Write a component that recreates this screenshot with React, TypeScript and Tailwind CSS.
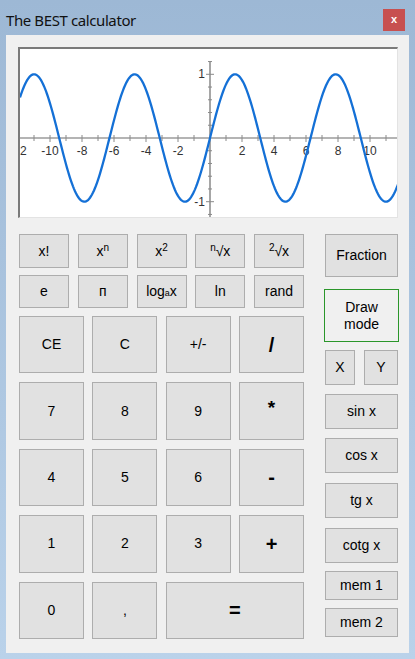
import type { ReactNode } from "react";

const OX = 190;
const OY = 89;
const SX = 16;
const SY = 63.7;

function sinePath() {
  const pts: string[] = [];
  for (let px = 0; px <= 378; px += 1) {
    const x = (px - OX) / SX;
    const y = OY - Math.sin(x) * SY;
    pts.push(`${px === 0 ? "M" : "L"}${px},${y.toFixed(2)}`);
  }
  return pts.join(" ");
}

const labelFont = "Liberation Sans, Arial, sans-serif";

function Graph() {
  const xs: number[] = [];
  for (let i = -12; i <= 12; i++) xs.push(i);
  const ys: number[] = [];
  for (let i = -6; i <= 6; i++) ys.push(i);

  return (
    <div className="w-[380px] h-[171px] bg-white border-t-2 border-l-2 border-t-[#7a7a7a] border-l-[#7a7a7a] border-r border-b border-r-[#e3e3e3] border-b-[#e3e3e3] overflow-hidden">
      <svg width="377" height="168" className="block">
        <line x1="0" y1={OY} x2="377" y2={OY} stroke="#6b6b6b" strokeWidth="1.2" />
        <line x1={OX} y1={OY - 1.2 * SY} x2={OX} y2="168" stroke="#6b6b6b" strokeWidth="1.2" />
        {xs.map((i) =>
          i === 0 ? null : (
            <line
              key={"xt" + i}
              x1={OX + i * SX}
              y1={OY - 3}
              x2={OX + i * SX}
              y2={OY + (i % 2 === 0 ? 4 : 3)}
              stroke="#8a8a8a"
              strokeWidth="1"
            />
          )
        )}
        {ys.map((i) =>
          i === 0 ? null : (
            <line
              key={"yt" + i}
              x1={OX - (Math.abs(i) === 5 ? 4 : 2)}
              y1={OY - (i / 5) * SY}
              x2={OX + (Math.abs(i) === 5 ? 4 : 2)}
              y2={OY - (i / 5) * SY}
              stroke="#8a8a8a"
              strokeWidth="1"
            />
          )
        )}
        {/* only the tail of the -12 label shows at the left edge */}
        <text x="0" y={OY + 17} fontSize="12" fontFamily={labelFont} fill="#333">
          2
        </text>
        {[-10, -8, -6, -4, -2, 2, 4, 6, 8, 10].map((i) => (
          <text
            key={"xl" + i}
            x={OX + i * SX}
            y={OY + 17}
            textAnchor="middle"
            fontSize="12"
            fontFamily={labelFont}
            fill="#333"
          >
            {i}
          </text>
        ))}
        <text x={OX - 5} y={OY - SY + 4} textAnchor="end" fontSize="12" fontFamily={labelFont} fill="#333">
          1
        </text>
        <text x={OX - 5} y={OY + SY + 4} textAnchor="end" fontSize="12" fontFamily={labelFont} fill="#333">
          -1
        </text>
        <path d={sinePath()} fill="none" stroke="#1470d6" strokeWidth="2.3" />
      </svg>
    </div>
  );
}

function Btn({ children, className = "" }: { children: ReactNode; className?: string }) {
  return (
    <div
      className={
        "flex items-center justify-center bg-[#e1e1e1] border border-[#adadad] text-black " +
        className
      }
    >
      {children}
    </div>
  );
}

function Sup({ children }: { children: ReactNode }) {
  return <span className="text-[10px] relative -top-[4px]">{children}</span>;
}

export default function App() {
  return (
    <div className="w-[415px] h-[659px] bg-gradient-to-b from-[#9db8d5] to-[#bad2ea] flex flex-col font-['Liberation_Sans',Arial,sans-serif] overflow-hidden">
      {/* title bar */}
      <div className="h-[35px] flex items-center justify-between pl-[6px] pr-[10px] pt-[5px]">
        <span className="text-[15px] text-[#111] font-['Noto_Sans',sans-serif] tracking-[-0.4px]">
          The BEST calculator
        </span>
        <div className="w-[22px] h-[22px] bg-[#c75050] flex items-center justify-center text-white text-[11px] font-bold leading-none pb-[2px]">
          x
        </div>
      </div>

      {/* client */}
      <div className="mx-[6px] h-[618px] bg-[#f0f0f0] pt-[12px] pl-[12px]">
        <Graph />

        <div className="mt-[16px] flex">
          {/* left keys */}
          <div className="w-[285px] ml-[1px]">
            <div className="flex justify-between h-[34px] text-[14px]">
              <Btn className="w-[50px]">x!</Btn>
              <Btn className="w-[50px]">
                x<Sup>n</Sup>
              </Btn>
              <Btn className="w-[50px]">
                x<Sup>2</Sup>
              </Btn>
              <Btn className="w-[50px]">
                <Sup>n</Sup>√x
              </Btn>
              <Btn className="w-[50px]">
                <Sup>2</Sup>√x
              </Btn>
            </div>
            <div className="mt-[7px] flex justify-between h-[33px] text-[14px]">
              <Btn className="w-[50px]">e</Btn>
              <Btn className="w-[50px]">п</Btn>
              <Btn className="w-[50px]">
                log<span className="text-[9px] mt-[4px]">a</span>x
              </Btn>
              <Btn className="w-[50px]">ln</Btn>
              <Btn className="w-[50px]">rand</Btn>
            </div>
            <div className="mt-[8px] h-[323px] grid grid-cols-[65px_65px_65px_65px] justify-between grid-rows-5 gap-y-[9px] text-[14px]">
              <Btn>CE</Btn>
              <Btn>C</Btn>
              <Btn>+/-</Btn>
              <Btn className="text-[20px] font-bold">/</Btn>
              <Btn>7</Btn>
              <Btn>8</Btn>
              <Btn>9</Btn>
              <Btn className="text-[19px] font-bold pb-[6px]">*</Btn>
              <Btn>4</Btn>
              <Btn>5</Btn>
              <Btn>6</Btn>
              <Btn className="text-[20px] font-bold">-</Btn>
              <Btn>1</Btn>
              <Btn>2</Btn>
              <Btn>3</Btn>
              <Btn className="text-[20px] font-bold">+</Btn>
              <Btn>0</Btn>
              <Btn className="text-[#334]">,</Btn>
              <Btn className="col-span-2 text-[20px] font-bold">=</Btn>
            </div>
          </div>

          {/* right column */}
          <div className="ml-[21px] w-[73px] flex flex-col text-[14px]">
            <Btn className="h-[43px]">Fraction</Btn>
            <div className="mt-[12px] h-[53px] -mx-[1px] border border-[#2a962a] bg-[#f0f0f0] flex items-center justify-center text-center leading-[17px]">
              Draw
              <br />
              mode
            </div>
            <div className="mt-[8px] h-[35px] flex justify-between">
              <Btn className="w-[30px]">X</Btn>
              <Btn className="w-[34px]">Y</Btn>
            </div>
            <Btn className="mt-[9px] h-[35px]">sin x</Btn>
            <Btn className="mt-[9px] h-[35px]">cos x</Btn>
            <Btn className="mt-[10px] h-[35px]">tg x</Btn>
            <Btn className="mt-[10px] h-[35px]">cotg x</Btn>
            <Btn className="mt-[8px] h-[29px]">mem 1</Btn>
            <Btn className="mt-[8px] h-[29px]">mem 2</Btn>
          </div>
        </div>
      </div>
    </div>
  );
}
